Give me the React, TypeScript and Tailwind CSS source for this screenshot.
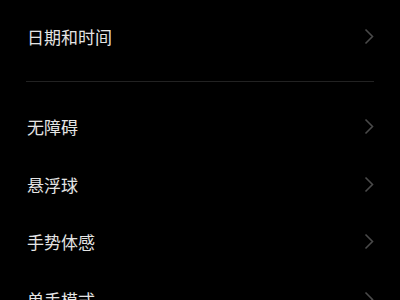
const items = ["无障碍", "悬浮球", "手势体感", "单手模式"];

function Chevron() {
  return (
    <svg width="10" height="17" viewBox="0 0 10 17" fill="none" className="shrink-0">
      <path d="M1.5 1.5 L8.5 8.5 L1.5 15.5" stroke="#4a4a4a" strokeWidth="1.6" />
    </svg>
  );
}

function Row({ label }: { label: string }) {
  return (
    <div className="flex h-[57.5px] items-center justify-between pl-[27px] pr-[26px]">
      <span className="text-[17px] leading-none text-[#e4e4e4]">{label}</span>
      <Chevron />
    </div>
  );
}

export default function App() {
  return (
    <div
      className="h-[300px] w-[400px] overflow-hidden bg-black pt-2"
      style={{ fontFamily: '"Noto Sans CJK SC", "Noto Sans", sans-serif' }}
    >
      <Row label="日期和时间" />
      <div className="mx-[26px] mt-[15.5px] h-px bg-[#222222]" />
      <div className="mt-4">
        {items.map((label) => (
          <Row key={label} label={label} />
        ))}
      </div>
    </div>
  );
}
